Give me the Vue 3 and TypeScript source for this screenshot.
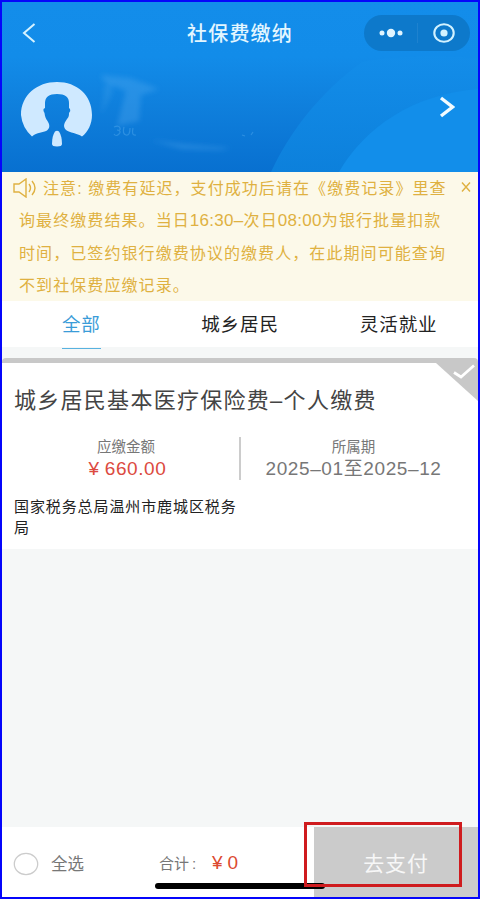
<script setup lang="ts">
import { ref } from 'vue'

const tabs = ['全部', '城乡居民', '灵活就业']
const active = ref(0)
</script>

<template>
  <main class="screen">
    <header class="hero">
      <svg class="waves" viewBox="0 0 476 170" preserveAspectRatio="none" aria-hidden="true">
        <defs>
          <linearGradient id="bandFill" x1="0" y1="0" x2="0" y2="1">
            <stop offset="0" stop-color="#138de9" />
            <stop offset="1" stop-color="#0d82dd" />
          </linearGradient>
          <filter id="soft" x="-20%" y="-20%" width="140%" height="140%"><feGaussianBlur stdDeviation="2.4" /></filter>
        </defs>
        <path d="M269 170C287 131 317 91 360 60C391 53 443 54 476 56V170Z" fill="url(#bandFill)" opacity=".9" />
        <path d="M337 170C362 126 411 92 476 87V170Z" fill="#128eea" />
        <g fill="#58b0f2" filter="url(#soft)">
          <path d="M99 73L128 76L157 87L139 93L137 119L115 124L124 89L102 80Z" opacity=".3" />
          <path d="M102 84L111 80L110 92L99 113L101 98Z" opacity=".2" />
          <path d="M148 138L181 142L229 146L218 148L180 147Z" opacity=".3" />
        </g>
        <g fill="none" stroke="#68b9f4" stroke-width="1.2" opacity=".35">
          <path d="M112 125q5 -2 6 1t-3 2q5 1 2 4t-5 0M122 125q-2 7 2 8t4 -7M131 126q-2 8 3 7" />
          <path d="M240 133l3 1M249 133l2 -3" />
        </g>
      </svg>
      <div class="navbar">
        <svg class="back" viewBox="0 0 14 20"><path d="M12.5 1L2 10L12.5 19" /></svg>
        <h1>社保费缴纳</h1>
        <div class="capsule">
          <svg viewBox="0 0 106 36">
            <g fill="#e0f4ff"><circle cx="18" cy="18" r="2.5" /><circle cx="27" cy="18" r="4.2" /><circle cx="36" cy="18" r="2.5" /></g>
            <path d="M53.5 8V28" stroke="#2a88d3" stroke-width="1" opacity=".6" />
            <ellipse cx="80" cy="18" rx="9.7" ry="8.8" fill="none" stroke="#d2f2ff" stroke-width="2.1" />
            <circle cx="80" cy="18" r="3.6" fill="#d2f2ff" />
          </svg>
        </div>
      </div>
      <div class="profile">
        <svg class="avatar" viewBox="0 0 72 66">
          <path
            d="M11 55.5A36 34 0 0 1 0 34C0 14 16 1 36 1S71 14 71 34C71 43 67 51 61 55.5C56 52 49 52 45 49C41 45 44 41 46 38C48 36 48 34 48 32Q50 30 49 28L48 27V22C48 16 44 13 36 13S24 16 24 22V27L22.5 28Q22 30 23.5 32C24 36 25 38 26.5 40C29 44 29 47 26 49.5C22 52 16 51 11 55.5Z"
            fill="#cfe9ff"
          />
          <path d="M34 50.5Q36 49 38 50.5Q41 55 41 63Q41 65.5 36 65.5Q31 65.5 31 63Q31 55 34 50.5Z" fill="#cfe9ff" />
        </svg>
        <svg class="go" viewBox="0 0 16 22"><path d="M2 2L13.5 11L2 20" /></svg>
      </div>
    </header>

    <section class="notice">
      <p class="n1">
        <svg class="horn" viewBox="0 0 24 20">
          <path d="M1 6H6L13 1V19L6 14H1Z" />
          <path d="M16 6Q19 10 16 14M19 3Q25 10 19 17" />
        </svg><span>注意: 缴费有延迟，支付成功后请在《缴费记录》里查</span>
        <svg class="close" viewBox="0 0 10 10"><path d="M1 .5L9 9.5M9 .5L1 9.5" /></svg>
      </p>
      <p class="n2">询最终缴费结果。当日<i>16:30–</i>次日<i>08:00</i>为银行批量扣款</p>
      <p class="n3">时间，已签约银行缴费协议的缴费人，在此期间可能查询</p>
      <p>不到社保费应缴记录。</p>
    </section>

    <nav class="tabs">
      <button v-for="(tab, i) in tabs" :key="tab" :class="{ active: active === i }" @click="active = i">
        <span>{{ tab }}</span>
      </button>
    </nav>

    <article class="card">
      <svg class="corner" viewBox="0 0 42 38">
        <path d="M0 0H42V38Z" fill="#c8c8c8" />
        <path d="M18 9.5L25 14L38 2.5" fill="none" stroke="#fff" stroke-width="2.7" />
      </svg>
      <h2>城乡居民基本医疗保险费–个人缴费</h2>
      <div class="facts">
        <div class="fact amount">
          <span class="label">应缴金额</span>
          <span class="value"><b>¥</b>660.00</span>
        </div>
        <div class="fact period">
          <span class="label">所属期</span>
          <span class="value">2025–01至2025–12</span>
        </div>
      </div>
      <p class="office">国家税务总局温州市鹿城区税务局</p>
    </article>

    <footer class="bar">
      <svg class="radio" viewBox="0 0 26 24"><ellipse cx="13" cy="12" rx="11.7" ry="10.7" /></svg>
      <span class="all">全选</span>
      <span class="sum">合计<em>:</em></span>
      <span class="total"><b>¥</b>0</span>
      <button class="pay">去支付</button>
      <div class="home"></div>
      <div class="highlight"></div>
    </footer>
  </main>
</template>

<style>
body { background: #fff; }
</style>

<style scoped>
* { box-sizing: border-box; }
.screen {
  width: 480px;
  height: 899px;
  border: 2px solid #0505fb;
  background: #f5f7f7;
  display: flex;
  flex-direction: column;
  position: relative;
  overflow: hidden;
  font-family: "Liberation Sans", "Noto Sans CJK SC", sans-serif;
  white-space: nowrap;
}
h1, h2, p { margin: 0; font-weight: 400; }
button { border: 0; padding: 0; background: none; font: inherit; }
svg { display: block; flex: none; }
b, i, em { font-style: normal; font-weight: 400; }

.hero {
  height: 170px;
  flex: none;
  position: relative;
  background: linear-gradient(#138dea 0, #128ce9 32%, #0f7fdc 62%, #0870d0 100%);
}
.waves { position: absolute; inset: 0; width: 100%; height: 100%; }
.navbar {
  position: relative;
  height: 62px;
  display: flex;
  align-items: center;
  padding: 0 8.5px 0 19.5px;
}
.back { width: 14px; height: 20px; fill: none; stroke: #d5f2ff; stroke-width: 2; }
h1 {
  margin-left: 151.5px;
  padding-top: 2px;
  font-size: 20px;
  letter-spacing: 1.2px;
  font-weight: 500;
  color: #e3f6ff;
  line-height: 30px;
}
.capsule { margin-left: auto; width: 106px; height: 36px; border-radius: 18px; background: #0d79cb; }
.profile { position: relative; display: flex; justify-content: space-between; padding: 17px 23px 0 19px; }
.avatar { width: 72px; height: 66px; }
.go { width: 16px; height: 22px; margin-top: 15px; fill: none; stroke: #f2fbff; stroke-width: 3.4; }

.notice {
  height: 129px;
  flex: none;
  background: #fcf9e9;
  color: #dfb141;
  font-size: 16px;
  letter-spacing: 1.08px;
  line-height: 33px;
  padding-left: 17px;
}
.notice p { height: 32.3px; }
.notice .n1 { display: flex; align-items: center; margin-left: -6px; letter-spacing: 1.07px; }
.horn { width: 24px; height: 20px; margin-right: 6px; fill: none; stroke: #dfb141; stroke-width: 1.4; }
.close { width: 10px; height: 10px; margin: -2px 7px 0 auto; fill: none; stroke: #dfb141; stroke-width: 1.4; }
.n2 i { font-size: 17px; letter-spacing: .3px; }

.tabs { height: 46px; flex: none; background: #fff; display: grid; grid-template-columns: repeat(3, 1fr); }
.tabs button { display: flex; justify-content: center; font-size: 18.5px; letter-spacing: .9px; line-height: 48px; color: #222; }
.tabs span { height: 48px; border-bottom: 1.5px solid transparent; }
.tabs .active { color: #3a9cd8; }
.tabs .active span { border-color: #58b2e0; }

.card {
  margin-top: 11px;
  height: 191px;
  flex: none;
  position: relative;
  border-top: 5px solid #c8c8c8;
  border-radius: 4px 4px 0 0;
  background: #fff;
  padding: 21px 12px 0;
}
.corner { position: absolute; right: 0; top: 0; width: 42px; height: 38px; }
h2 { font-size: 22px; letter-spacing: 1.28px; line-height: 34px; color: #444; }
.facts { display: flex; margin: 19px -12px 0; height: 43px; }
.fact { width: 239px; display: flex; flex-direction: column; align-items: center; }
.amount { border-right: 2px solid #ccc; padding-left: 14px; }
.period { width: 237px; padding-right: 12px; }
.label { font-size: 14.5px; line-height: 20px; color: #777; }
.amount .label { margin-left: -3px; }
.value { font-size: 19px; line-height: 23px; letter-spacing: .6px; color: #777; }
.amount .value { color: #dc4a40; }
.value b { margin-right: 5px; }
.office { width: 228px; white-space: normal; margin-top: 16px; font-size: 15px; letter-spacing: .9px; line-height: 21px; color: #222; }

.bar { height: 70px; flex: none; margin-top: auto; background: #fff; position: relative; display: flex; align-items: center; padding-left: 11px; }
.radio { width: 26px; height: 24px; margin-top: 3px; fill: none; stroke: #ccc; stroke-width: 1.3; }
.all { margin-left: 12px; width: 108px; padding-top: 1px; font-size: 16.5px; color: #777; }
.sum { width: 53px; font-size: 15px; color: #777; }
.sum em { margin-left: 3px; }
.total { padding-top: 1px; font-size: 19px; color: #dc4a30; }
.total b { margin-right: 5px; }
.pay { margin-left: auto; width: 164px; height: 70px; background: #cbcbcb; color: #f7f7f7; font-size: 21px; letter-spacing: .8px; }
.home { position: absolute; left: 153px; top: 56px; width: 170px; height: 6px; border-radius: 3px; background: #000; }
.highlight { position: absolute; left: 302px; top: -5px; width: 158px; height: 65px; border: 3px solid #cf1b1e; }
</style>
